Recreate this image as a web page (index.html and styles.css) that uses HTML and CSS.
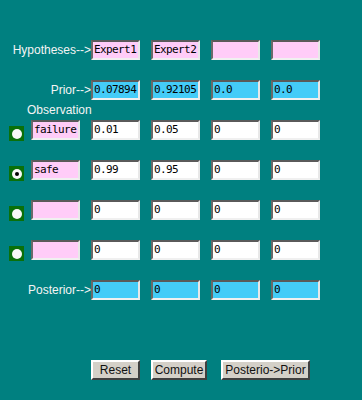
FILE: index.html
```
<!DOCTYPE html>
<html>
<head>
<meta charset="utf-8">
<link rel="stylesheet" href="styles.css">
</head>
<body>
<div class="app">
  <div class="row">
    <div class="lbl">Hypotheses--&gt;</div>
    <input class="fld pink" value="Expert1">
    <input class="fld pink" value="Expert2">
    <input class="fld pink" value="">
    <input class="fld pink" value="">
  </div>
  <div class="row tight">
    <div class="lbl">Prior--&gt;</div>
    <input class="fld cyan" value="0.07894">
    <input class="fld cyan" value="0.92105">
    <input class="fld cyan" value="0.0">
    <input class="fld cyan" value="0.0">
  </div>
  <div class="obs">Observation</div>
  <div class="row obsrow">
    <span class="radio"><span class="dot"></span></span>
    <input class="fld pink" value="failure">
    <input class="fld white" value="0.01">
    <input class="fld white" value="0.05">
    <input class="fld white" value="0">
    <input class="fld white" value="0">
  </div>
  <div class="row obsrow">
    <span class="radio"><span class="dot on"></span></span>
    <input class="fld pink" value="safe">
    <input class="fld white" value="0.99">
    <input class="fld white" value="0.95">
    <input class="fld white" value="0">
    <input class="fld white" value="0">
  </div>
  <div class="row obsrow">
    <span class="radio"><span class="dot"></span></span>
    <input class="fld pink" value="">
    <input class="fld white" value="0">
    <input class="fld white" value="0">
    <input class="fld white" value="0">
    <input class="fld white" value="0">
  </div>
  <div class="row obsrow">
    <span class="radio"><span class="dot"></span></span>
    <input class="fld pink" value="">
    <input class="fld white" value="0">
    <input class="fld white" value="0">
    <input class="fld white" value="0">
    <input class="fld white" value="0">
  </div>
  <div class="row last">
    <div class="lbl">Posterior--&gt;</div>
    <input class="fld cyan" value="0">
    <input class="fld cyan" value="0">
    <input class="fld cyan" value="0">
    <input class="fld cyan" value="0">
  </div>
  <div class="btns">
    <button class="btn w-reset">Reset</button>
    <button class="btn w-compute">Compute</button>
    <button class="btn w-post">Posterio-&gt;Prior</button>
  </div>
</div>
</body>
</html>
```
FILE: styles.css
```
html, body {
  margin: 0;
  padding: 0;
  background: #008080;
}
.app {
  width: 362px;
  height: 400px;
  padding-top: 40px;
  box-sizing: border-box;
  font-family: "Liberation Sans", Arial, sans-serif;
}
.row {
  display: flex;
  align-items: flex-start;
  height: 20px;
  margin-bottom: 20px;
  gap: 11px;
}
.row.tight { margin-bottom: 0; }
.row.last { margin-bottom: 60px; }
.lbl {
  width: 91px;
  margin-right: -11px;
  text-align: right;
  color: #f4f4f4;
  font-size: 12px;
  line-height: 20px;
  white-space: nowrap;
}
.obs {
  height: 20px;
  line-height: 20px;
  padding-left: 27px;
  color: #f4f4f4;
  font-size: 12px;
}
.obsrow { padding-left: 9px; }
.radio {
  width: 15px;
  height: 15px;
  margin-top: 6px;
  margin-right: -4px;
  background: #0a700a;
  display: flex;
  align-items: center;
  justify-content: center;
  flex: none;
}
.dot {
  width: 10px;
  height: 10px;
  border-radius: 50%;
  background: #f8f8f8;
  display: flex;
  align-items: center;
  justify-content: center;
}
.dot.on::after {
  content: "";
  width: 4px;
  height: 4px;
  border-radius: 50%;
  background: #000;
}
.fld {
  width: 49px;
  height: 20px;
  box-sizing: border-box;
  margin: 0;
  padding: 0 0 2px 1px;
  border-style: solid;
  border-width: 2px;
  border-color: #5a5a5a #e8e8e8 #f0f0f0 #6a6a6a;
  font-family: "DejaVu Sans Mono", "Liberation Mono", monospace;
  font-size: 11px;
  letter-spacing: -0.6px;
  color: #000;
  outline: none;
  flex: none;
}
.pink { background: #ffccf8; }
.cyan { background: #44ccf8; }
.white { background: #ffffff; }
.btns {
  display: flex;
  padding-left: 91px;
}
.btn {
  height: 20px;
  margin: 0;
  padding: 0;
  background: #d4d0c8;
  border-style: solid;
  border-width: 2px;
  border-color: #ffffff #404040 #404040 #ffffff;
  font-family: "Liberation Sans", Arial, sans-serif;
  font-size: 12px;
  color: #111;
  line-height: 14px;
  white-space: nowrap;
}
.w-reset { width: 49px; margin-right: 11px; }
.w-compute { width: 56px; margin-right: 14px; }
.w-post { width: 89px; }
```
